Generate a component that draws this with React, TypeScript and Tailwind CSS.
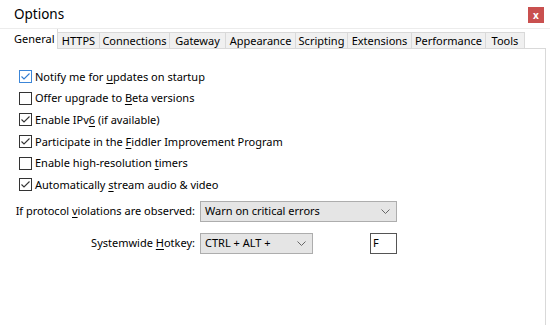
import React from "react";

const tabs = [
  { label: "HTTPS", w: 42 },
  { label: "Connections", w: 70 },
  { label: "Gateway", w: 56 },
  { label: "Appearance", w: 70 },
  { label: "Scripting", w: 52 },
  { label: "Extensions", w: 64 },
  { label: "Performance", w: 74 },
  { label: "Tools", w: 39 },
];

function U({ children }: { children: React.ReactNode }) {
  return <span className="underline underline-offset-2">{children}</span>;
}

function Check({ checked, focus }: { checked: boolean; focus?: boolean }) {
  const stroke = focus ? "#2f7bd1" : "#333333";
  return (
    <svg width="13" height="13" viewBox="0 0 13 13" className="shrink-0">
      <rect x="0.5" y="0.5" width="12" height="12" fill="#ffffff" stroke={focus ? "#3c86d8" : "#333333"} />
      {checked && (
        <path d="M2.5 6.5 L5 9 L10.5 3.5" fill="none" stroke={stroke} strokeWidth="1.1" />
      )}
    </svg>
  );
}

const items: { checked: boolean; focus?: boolean; text: React.ReactNode }[] = [
  { checked: true, focus: true, text: <>Notify me for <U>u</U>pdates on startup</> },
  { checked: false, text: <>Offer upgrade to <U>B</U>eta versions</> },
  { checked: true, text: <>Enable IPv<U>6</U> (if available)</> },
  { checked: true, text: <>Participate in the <U>F</U>iddler Improvement Program</> },
  { checked: false, text: <>Enable high-resolution <U>t</U>imers</> },
  { checked: true, text: <>Automatically <U>s</U>tream audio &amp; video</> },
];

function Chevron() {
  return (
    <svg width="9" height="5" viewBox="0 0 9 5">
      <path d="M0.5 0.5 L4.5 4.5 L8.5 0.5" fill="none" stroke="#666" strokeWidth="1" />
    </svg>
  );
}

export default function App() {
  return (
    <div
      className="w-[550px] h-[325px] bg-white overflow-hidden text-black"
      style={{ fontFamily: '"Noto Sans", "Open Sans", sans-serif' }}
    >
      <div className="h-[29px] flex items-start justify-between border-b border-[#ececec]">
        <div className="pl-[14px] pt-[4px] text-[13.5px] leading-[20px]">Options</div>
        <div className="mt-[7px] mr-[6px] w-[16px] h-[16px] bg-[#c9504f] flex items-center justify-center text-white text-[10px] font-bold leading-none">
          x
        </div>
      </div>
      <div className="flex items-end pl-[10px] h-[20px] text-[11px] leading-none whitespace-nowrap">
        <div className="w-[48px] h-[20px] bg-white border-r border-[#d9d9d9] flex items-center pl-[4px] pb-[2px]">
          General
        </div>
        {tabs.map((t) => (
          <div
            key={t.label}
            className="h-[17px] bg-[#f0f0f0] border-t border-r border-b border-[#d9d9d9] flex items-center justify-center"
            style={{ width: t.w }}
          >
            {t.label}
          </div>
        ))}
        <div className="flex-1 mr-[4px] border-b border-r border-[#d9d9d9] h-[1px] self-end" />
      </div>
      <div className="ml-[10px] w-[536px] h-[280px] border-r border-[#d9d9d9]">
        <div className="pt-[17px] pl-[9px] flex flex-col text-[11px] leading-[14px]">
          {items.map((it, i) => (
            <div key={i} className="h-[21.6px] flex items-center gap-[3px]">
              <Check checked={it.checked} focus={it.focus} />
              <span>{it.text}</span>
            </div>
          ))}
        </div>
        <div className="mt-[5px] flex flex-col gap-[11px] text-[11px] whitespace-nowrap">
          <div className="flex items-center">
            <div className="w-[190px] text-right pr-[5px]">
              If protocol <U>v</U>iolations are observed:
            </div>
            <div className="w-[197px] h-[21px] bg-[#e5e5e5] border border-[#adadad] flex items-center justify-between pl-[4px] pr-[6px]">
              <span>Warn on critical errors</span>
              <Chevron />
            </div>
          </div>
          <div className="flex items-center">
            <div className="w-[190px] text-right pr-[5px]">
              Systemwide <U>H</U>otkey:
            </div>
            <div className="w-[113px] h-[21px] bg-[#e5e5e5] border border-[#adadad] flex items-center justify-between pl-[4px] pr-[6px]">
              <span>CTRL + ALT +</span>
              <Chevron />
            </div>
            <div className="ml-[57px] w-[27px] h-[21px] border border-[#555] bg-white flex items-center pl-[2px]">
              F
            </div>
          </div>
        </div>
      </div>
    </div>
  );
}
